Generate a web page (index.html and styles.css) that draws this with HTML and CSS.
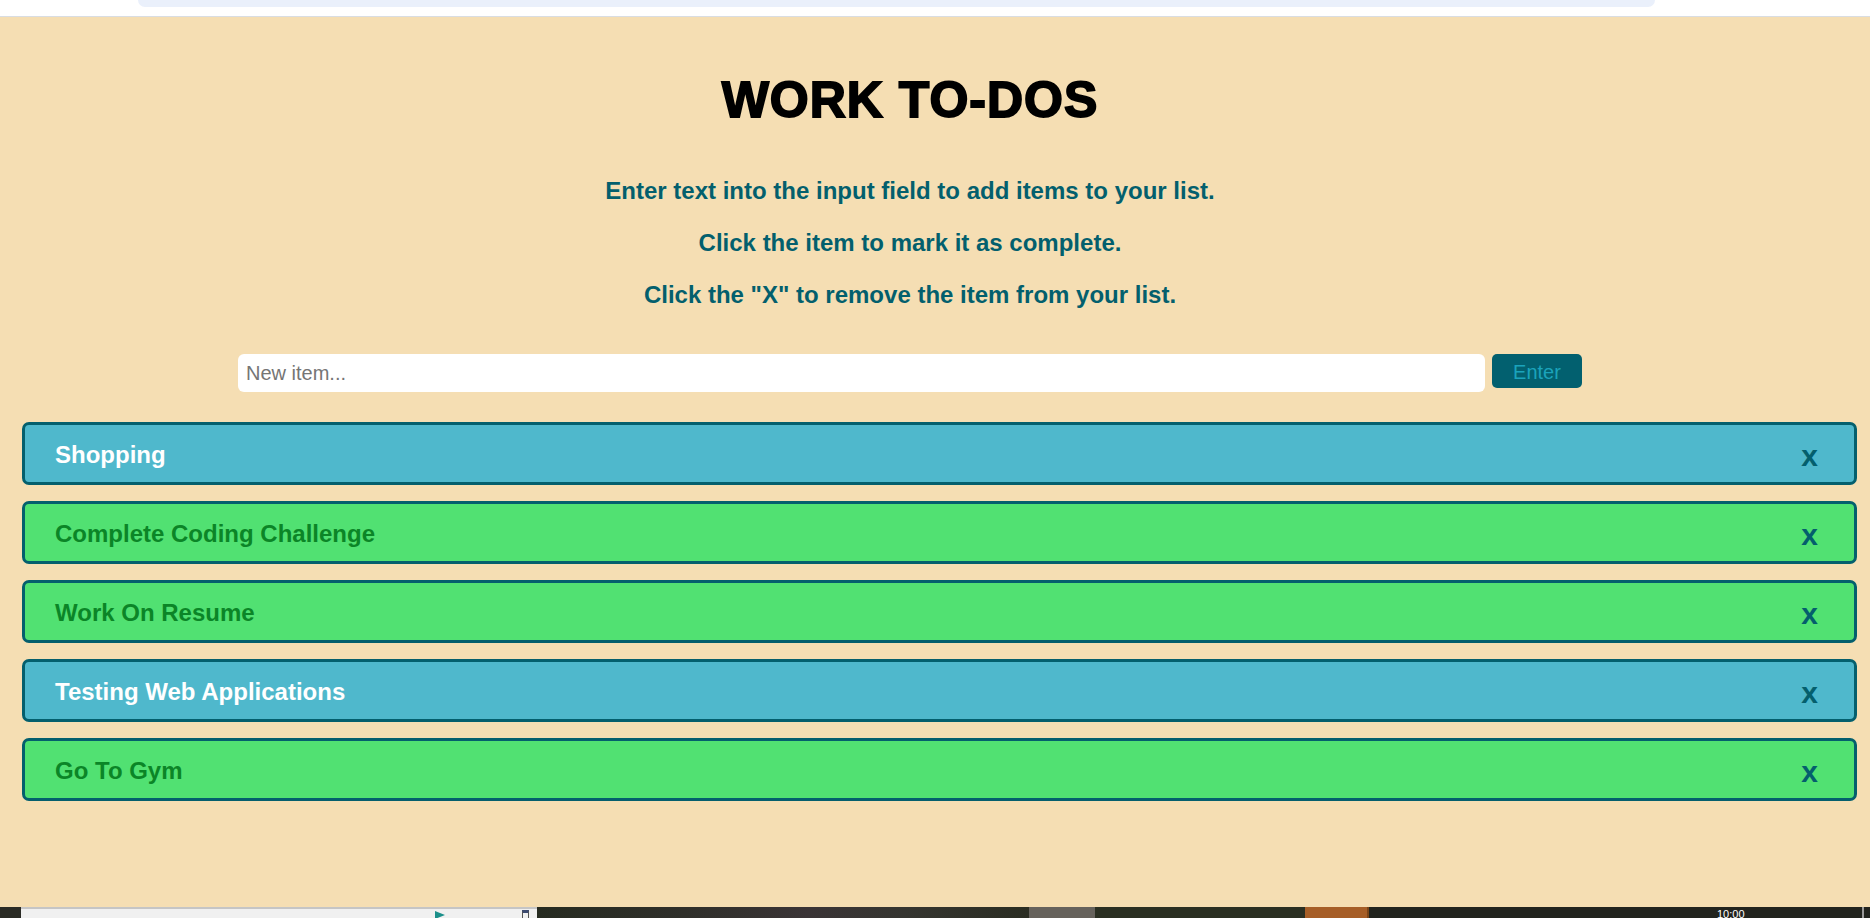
FILE: index.html
```html
<!DOCTYPE html>
<html lang="en">
<head>
<meta charset="utf-8">
<title>Work To-Dos</title>
<link rel="stylesheet" href="styles.css">
</head>
<body>
<div class="topstrip"><div class="tabbar"></div></div>
<main class="page">
  <header class="intro">
    <h1 class="title">WORK TO-DOS</h1>
    <p class="hint">Enter text into the input field to add items to your list.</p>
    <p class="hint">Click the item to mark it as complete.</p>
    <p class="hint">Click the "X" to remove the item from your list.</p>
    <form class="entry">
      <input class="entry-input" type="text" placeholder="New item...">
      <button class="entry-btn" type="button">Enter</button>
    </form>
  </header>
  <ul class="todo-list">
    <li class="todo todo--open"><span class="todo-text">Shopping</span><span class="todo-x">x</span></li>
    <li class="todo todo--done"><span class="todo-text">Complete Coding Challenge</span><span class="todo-x">x</span></li>
    <li class="todo todo--done"><span class="todo-text">Work On Resume</span><span class="todo-x">x</span></li>
    <li class="todo todo--open"><span class="todo-text">Testing Web Applications</span><span class="todo-x">x</span></li>
    <li class="todo todo--done"><span class="todo-text">Go To Gym</span><span class="todo-x">x</span></li>
  </ul>
</main>
<footer class="taskbar">
  <div class="tb tb-edge"></div>
  <div class="tb tb-panel">
    <span class="tb-arrow"></span>
    <span class="tb-batt"></span>
  </div>
  <div class="tb tb-wall"></div>
  <div class="tb tb-gray"></div>
  <div class="tb tb-dark"></div>
  <div class="tb tb-orange"></div>
  <div class="tb tb-right"><span class="tb-clock">10:00</span></div>
  <div class="tb tb-line"></div>
  <div class="tb tb-end"></div>
</footer>
</body>
</html>
```
FILE: styles.css
```css
* { box-sizing: border-box; }
html, body {
  margin: 0;
  padding: 0;
  height: 100%;
}
body {
  display: flex;
  flex-direction: column;
  height: 918px;
  overflow: hidden;
  font-family: "Liberation Sans", Arial, sans-serif;
  background: #ffffff;
}
.topstrip {
  height: 17px;
  flex: none;
  background: #ffffff;
  border-bottom: 1px solid #d9dde2;
  padding-left: 138px;
}
.tabbar {
  width: 1517px;
  height: 7px;
  background: #eaf0fb;
  border-radius: 0 0 9px 9px;
}
.page {
  flex: 1;
  background: #f5deb3;
  display: flex;
  flex-direction: column;
}
.intro {
  padding-right: 50px;
  display: flex;
  flex-direction: column;
  align-items: center;
}
.title {
  margin: 58px 0 40px;
  font-size: 50px;
  line-height: 50px;
  font-weight: 700;
  color: #000;
  -webkit-text-stroke: 1.8px #000;
  letter-spacing: 1px;
}
.hint {
  margin: 0;
  font-size: 24px;
  line-height: 52px;
  font-weight: 700;
  color: #035f6d;
  text-align: center;
}
.entry {
  margin: 33px 0 0;
  display: flex;
  align-items: flex-start;
  gap: 7px;
}
.entry-input {
  width: 1247px;
  height: 38px;
  border: none;
  border-radius: 6px;
  background: #ffffff;
  padding: 0 8px;
  font-family: "Liberation Sans", Arial, sans-serif;
  font-size: 20px;
  color: #333;
  outline: none;
}
.entry-input::placeholder { color: #757575; }
.entry-btn {
  width: 90px;
  height: 34px;
  border: none;
  border-radius: 5px;
  background: #02606f;
  color: #1ba3bb;
  font-family: "Liberation Sans", Arial, sans-serif;
  font-size: 20px;
  padding: 2px 0 0;
}
.todo-list {
  list-style: none;
  margin: 30px 0 0;
  padding: 0 13px 0 22px;
  display: flex;
  flex-direction: column;
  gap: 16px;
}
.todo {
  height: 63px;
  border: 3px solid #045f6d;
  border-radius: 7px;
  display: flex;
  align-items: center;
  justify-content: space-between;
  padding: 2px 36px 0 30px;
}
.todo--open { background: #4fb8cc; }
.todo--done { background: #51e172; }
.todo-text {
  font-size: 24px;
  font-weight: 700;
}
.todo--open .todo-text { color: #ffffff; }
.todo--done .todo-text { color: #0b8527; }
.todo-x {
  font-size: 30px;
  font-weight: 700;
  color: #045f6d;
  line-height: 1;
  padding-top: 2px;
}
.taskbar {
  height: 11px;
  flex: none;
  display: flex;
  background: #23251f;
}
.tb { height: 100%; }
.tb-edge { width: 21px; background: #2a2b25; }
.tb-panel {
  width: 516px;
  background: #f0f0f0;
  border-top: 2px solid #c5c5c5;
  position: relative;
}
.tb-arrow {
  position: absolute;
  left: 414px;
  top: 2px;
  width: 0;
  height: 0;
  border-left: 10px solid #1b8f8a;
  border-top: 4px solid transparent;
  border-bottom: 4px solid transparent;
}
.tb-batt {
  position: absolute;
  left: 501px;
  top: 1px;
  width: 7px;
  height: 10px;
  border: 1px solid #555;
  border-top: 3px solid #3c4a70;
}
.tb-wall {
  width: 492px;
  background: linear-gradient(90deg, #262b20 0%, #2f2f2a 30%, #3a3436 55%, #353530 75%, #2a2d22 100%);
}
.tb-gray { width: 66px; background: #66625c; }
.tb-dark { width: 210px; background: #2a2f22; }
.tb-orange { width: 64px; background: #a65e27; border-right: 2px solid #7a4518; }
.tb-right {
  width: 493px;
  background: #22241e;
  position: relative;
}
.tb-clock {
  position: absolute;
  left: 348px;
  top: 2px;
  color: #ffffff;
  font-size: 11px;
  line-height: 11px;
}
.tb-line { width: 2px; background: #9a9a9a; }
.tb-end { flex: 1; background: #22241e; }
```
